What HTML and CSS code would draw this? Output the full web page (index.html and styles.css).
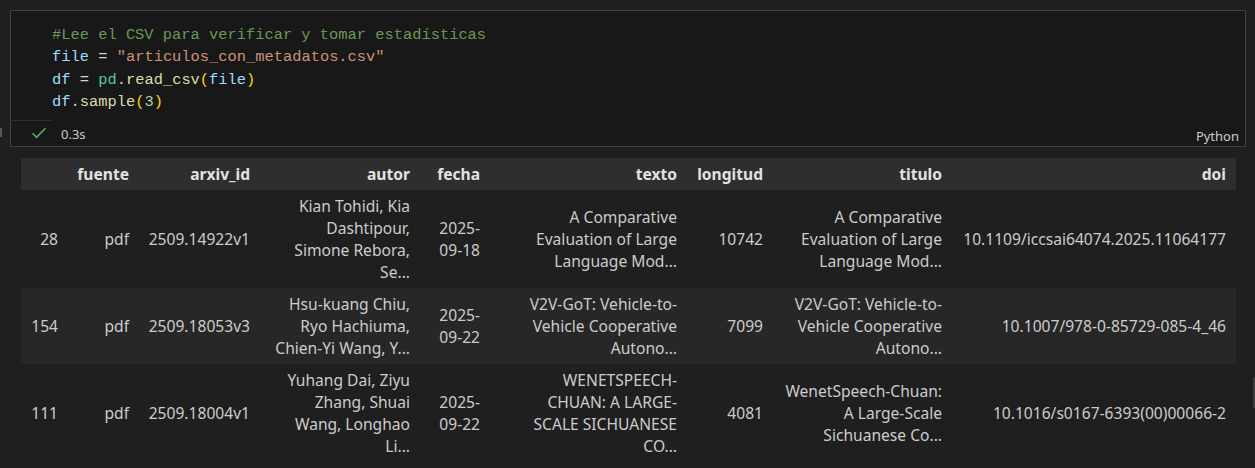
FILE: index.html
```html
<!DOCTYPE html>
<html>
<head>
<meta charset="utf-8">
<link rel="stylesheet" href="styles.css">
</head>
<body>
<div class="page">
  <span class="left-mark"></span>
  <div class="cell">
    <div class="editor">
      <div class="line"><span class="c-comment">#Lee el CSV para verificar y tomar estadísticas</span></div>
      <div class="line"><span class="c-var">file</span> <span class="c-op">=</span> <span class="c-str">"articulos_con_metadatos.csv"</span></div>
      <div class="line"><span class="c-var">df</span> <span class="c-op">=</span> <span class="c-mod">pd</span><span class="c-op">.</span><span class="c-fn">read_csv</span><span class="c-br">(</span><span class="c-var">file</span><span class="c-br">)</span></div>
      <div class="line"><span class="c-var">df</span><span class="c-op">.</span><span class="c-fn">sample</span><span class="c-br">(</span><span class="c-num">3</span><span class="c-br">)</span></div>
    </div>
    <div class="gutter-sep"></div>
    <div class="status">
      <svg class="check" width="16" height="12" viewBox="0 0 16 12"><path d="M1.5 6.2 L5.6 10.3 L14.5 1.2" fill="none" stroke="#5fae5f" stroke-width="1.6"/></svg>
      <span class="time">0.3s</span>
      <span class="lang">Python</span>
    </div>
  </div>

  <table class="df">
    <colgroup>
      <col class="w-idx"><col class="w-fuente"><col class="w-arxiv"><col class="w-autor"><col class="w-fecha"><col class="w-texto"><col class="w-long"><col class="w-titulo"><col class="w-doi">
    </colgroup>
    <thead>
      <tr><th></th><th>fuente</th><th>arxiv_id</th><th>autor</th><th>fecha</th><th>texto</th><th>longitud</th><th>titulo</th><th>doi</th></tr>
    </thead>
    <tbody>
      <tr>
        <td>28</td><td>pdf</td><td>2509.14922v1</td>
        <td>Kian Tohidi, Kia<br>Dashtipour,<br>Simone Rebora,<br>Se...</td>
        <td>2025-<br>09-18</td>
        <td>A Comparative<br>Evaluation of Large<br>Language Mod...</td>
        <td>10742</td>
        <td>A Comparative<br>Evaluation of Large<br>Language Mod...</td>
        <td>10.1109/iccsai64074.2025.11064177</td>
      </tr>
      <tr class="odd">
        <td>154</td><td>pdf</td><td>2509.18053v3</td>
        <td>Hsu-kuang Chiu,<br>Ryo Hachiuma,<br>Chien-Yi Wang, Y...</td>
        <td>2025-<br>09-22</td>
        <td>V2V-GoT: Vehicle-to-<br>Vehicle Cooperative<br>Autono...</td>
        <td>7099</td>
        <td>V2V-GoT: Vehicle-to-<br>Vehicle Cooperative<br>Autono...</td>
        <td>10.1007/978-0-85729-085-4_46</td>
      </tr>
      <tr>
        <td>111</td><td>pdf</td><td>2509.18004v1</td>
        <td>Yuhang Dai, Ziyu<br>Zhang, Shuai<br>Wang, Longhao<br>Li...</td>
        <td>2025-<br>09-22</td>
        <td>WENETSPEECH-<br>CHUAN: A LARGE-<br>SCALE SICHUANESE<br>CO...</td>
        <td>4081</td>
        <td>WenetSpeech-Chuan:<br>A Large-Scale<br>Sichuanese Co...</td>
        <td>10.1016/s0167-6393(00)00066-2</td>
      </tr>
    </tbody>
  </table>
  <span class="scroll-thumb"></span>
</div>
</body>
</html>
```

FILE: styles.css
```css
html, body {
  margin: 0;
  padding: 0;
  background: #1f1f1f;
  height: 100%;
  overflow: hidden;
}

.page {
  position: relative;
  height: 468px;
  padding-top: 10px;
  box-sizing: border-box;
}

.left-mark {
  position: absolute;
  left: 0;
  top: 128px;
  width: 2px;
  height: 9px;
  background: #555555;
}

.scroll-thumb {
  position: absolute;
  right: 0;
  top: 378px;
  width: 2px;
  height: 30px;
  background: #3a3a3a;
}

.cell {
  margin: 0 9px 0 10px;
  height: 137px;
  box-sizing: border-box;
  border: 1px solid #414141;
  background: #181818;
  display: flex;
  flex-direction: column;
}

.editor {
  padding: 13px 0 0 41px;
  height: 109px;
  box-sizing: border-box;
  font-family: "Liberation Mono", "DejaVu Sans Mono", monospace;
  font-size: 15.4px;
  line-height: 22.33px;
  color: #d4d4d4;
}

.line {
  white-space: pre;
  height: 22.33px;
}

.c-comment { color: #6a9955; }
.c-var { color: #9cdcfe; }
.c-op { color: #d4d4d4; }
.c-str { color: #ce9178; }
.c-mod { color: #4ec9b0; }
.c-fn { color: #dcdcaa; }
.c-br { color: #ffd700; }
.c-num { color: #b5cea8; }

.gutter-sep {
  width: 42px;
  height: 1px;
  background: #2e2e2e;
}

.status {
  flex: 1;
  display: flex;
  align-items: center;
  padding: 0 6px 0 20px;
  font-family: "Noto Sans", "Open Sans", sans-serif;
  font-size: 13px;
  color: #cccccc;
}

.check {
  display: block;
  margin-right: 14px;
  margin-top: -2px;
}

.time {
  color: #c8c8c8;
}

.lang {
  margin-left: auto;
  margin-top: 4px;
  color: #cccccc;
}

.df {
  margin: 11px 0 0 21px;
  border-collapse: collapse;
  table-layout: fixed;
  width: 1215px;
  font-family: "Noto Sans", "Open Sans", sans-serif;
  font-size: 15.6px;
  line-height: 22px;
  color: #cccccc;
}

.w-idx { width: 47px; }
.w-fuente { width: 71px; }
.w-arxiv { width: 121px; }
.w-autor { width: 160px; }
.w-fecha { width: 70px; }
.w-texto { width: 197px; }
.w-long { width: 86px; }
.w-titulo { width: 179px; }
.w-doi { width: 284px; }

.df th,
.df td {
  padding: 5px 10px 5px 0;
  text-align: right;
  vertical-align: middle;
  white-space: nowrap;
}

.df th {
  font-weight: 700;
  color: #e2e2e2;
}

.df thead tr {
  background: #2e2e2e;
}

.df tbody tr.odd {
  background: #272727;
}
```
